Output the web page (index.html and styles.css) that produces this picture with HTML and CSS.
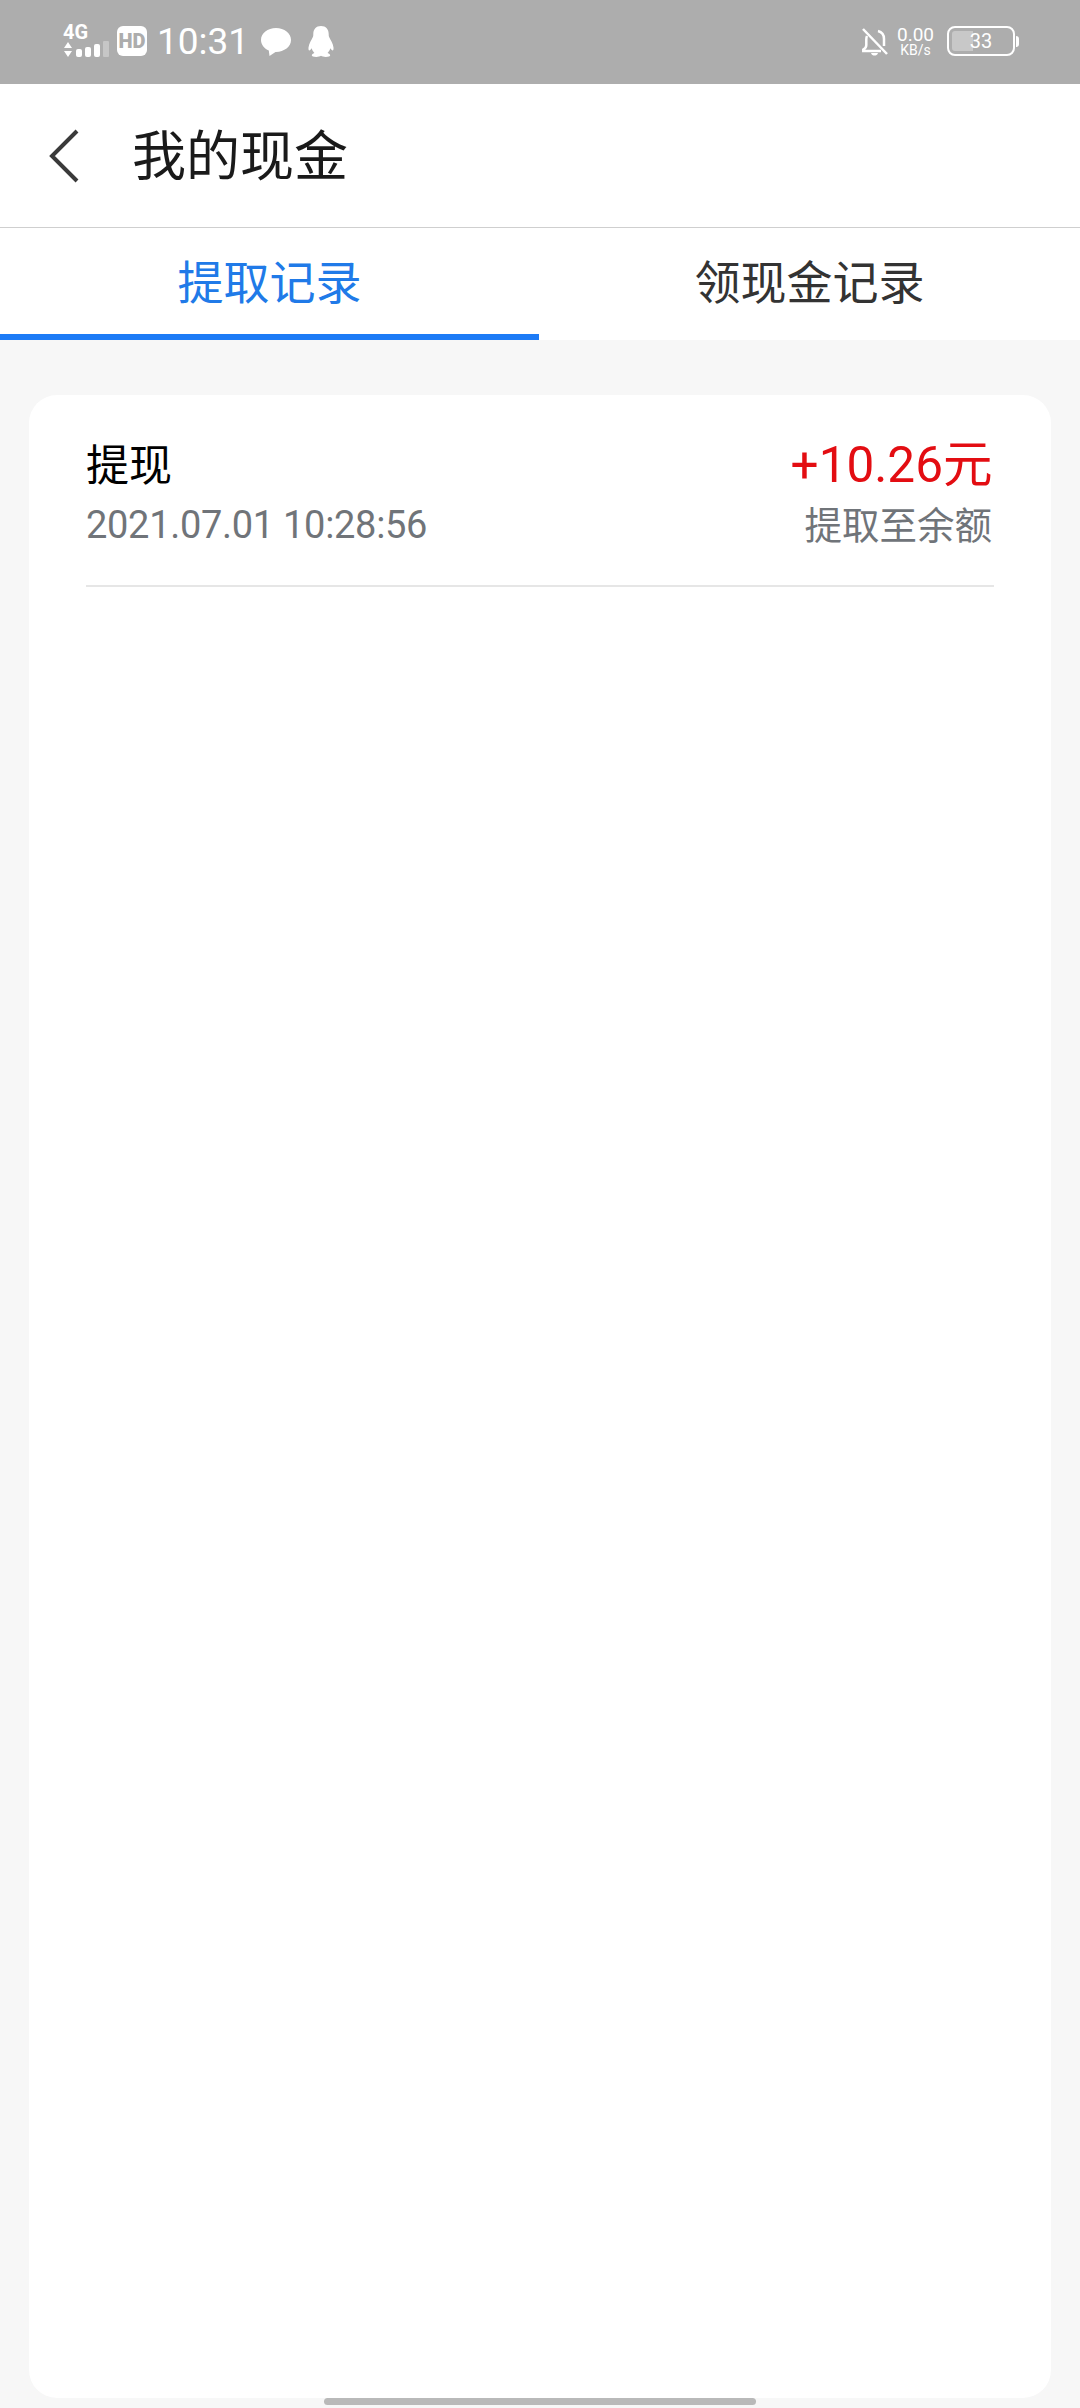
FILE: index.html
```html
<!DOCTYPE html>
<html lang="zh-CN">
<head>
  <meta charset="UTF-8">
  <meta name="viewport" content="width=device-width, initial-scale=1.0">
  <title>我的现金</title>
  <link rel="stylesheet" href="styles.css">
</head>
<body>
  <div class="status-bar">
    <div class="status-left">
      <div class="signal">
        <span class="net-type">4G</span>
        <svg width="48" height="17" viewBox="0 0 48 17">
          <path d="M1 7 5 1l4 6zM1 10h8l-4 6z" fill="#fff"/>
          <rect x="13" y="8" width="6" height="8" rx="2" fill="#fff"/>
          <rect x="22" y="6" width="6" height="10" rx="2" fill="#fff"/>
          <rect x="31" y="3" width="6" height="13" rx="2" fill="#fff"/>
          <rect x="40" y="0" width="6" height="16" rx="1" fill="#c6c6c6"/>
        </svg>
      </div>
      <span class="hd-badge">HD</span>
      <span class="clock">10:31</span>
      <svg class="icon-msg" width="30" height="29" viewBox="0 0 30 29">
        <path d="M15 0C6.700 0 0 5.300 0 12c0 4.600 3.200 8.600 7.800 10.600L8.500 28l6-4.100h.5c8.300 0 15-5.300 15-11.900S23.300 0 15 0z" fill="#fff"/>
      </svg>
      <svg class="icon-qq" width="26" height="31" viewBox="0 0 26 31">
        <path d="M13 0c-5 0-7.700 3.500-7.700 8 0 1.200 0 2-.3 2.800C3.500 14 1 17.500 .5 21.500c-.2 1.700.2 3 .8 3 .7 0 1.700-1 2.400-2.200.4 1.800 1.300 3.300 2.700 4.600-1.500.5-2.600 1.400-2.600 2.400 0 1 1.700 1.700 4.500 1.700 2 0 3.600-.5 4.700-1.200 1.100.7 2.700 1.200 4.700 1.200 2.800 0 4.500-.7 4.500-1.700 0-1-1.100-1.900-2.600-2.400 1.400-1.300 2.300-2.800 2.700-4.600.7 1.200 1.700 2.200 2.400 2.200.6 0 1-1.300.8-3-.5-4-3-7.500-4.500-10.700-.3-.8-.3-1.600-.3-2.800C20.700 3.500 18 0 13 0z" fill="#fff"/>
      </svg>
    </div>
    <div class="status-right">
      <svg width="28" height="30" viewBox="0 0 28 30" fill="none" stroke="#fff" stroke-width="2.500">
        <path d="M2 2 26 27"/>
        <path d="M6 9c-.5 1-.7 2-.7 3.500V18c0 2-1 3.500-3 4.500V24H20M17 4c4 1 6 4 6 8v7"/>
        <path d="M10 26h7c-.5 2-2 2.500-3.500 2.500S10.500 28 10 26z" fill="#fff" stroke="none"/>
      </svg>
      <div class="net-speed">
        <span class="speed-num">0.00</span>
        <span class="speed-unit">KB/s</span>
      </div>
      <div class="battery">
        <div class="battery-body">
          <div class="battery-fill"></div>
          <span class="battery-num">33</span>
        </div>
        <div class="battery-cap"></div>
      </div>
    </div>
  </div>

  <header class="title-bar">
    <svg class="back" width="32" height="54" viewBox="0 0 32 54" fill="none">
      <path d="M29 2 4 27l25 25" stroke="#3a3a3a" stroke-width="4"/>
    </svg>
    <h1>我的现金</h1>
  </header>

  <nav class="tabs">
    <div class="tab tab-active">提取记录</div>
    <div class="tab">领现金记录</div>
  </nav>

  <main class="content">
    <section class="card">
      <div class="record">
        <div class="record-left">
          <div class="record-name">提现</div>
          <div class="record-time">2021.07.01 10:28:56</div>
        </div>
        <div class="record-right">
          <div class="record-amount">+10.26元</div>
          <div class="record-note">提取至余额</div>
        </div>
      </div>
    </section>
    <div class="home-bar"></div>
  </main>
</body>
</html>
```

FILE: styles.css
```css
* {
  box-sizing: border-box;
}

html,
body {
  margin: 0;
  height: 100%;
}

body {
  display: flex;
  flex-direction: column;
  height: 2408px;
  overflow: hidden;
  background-color: #f7f7f7;
  font-family: "Noto Sans CJK SC", "Roboto", sans-serif;
}

.status-bar {
  display: flex;
  justify-content: space-between;
  align-items: center;
  height: 84px;
  padding: 0 61px 2px 63px;
  background-color: #adadad;
  color: #fff;
}

.status-left,
.status-right {
  display: flex;
  align-items: center;
}

.signal {
  display: flex;
  flex-direction: column;
  width: 48px;
}

.net-type {
  font-family: "Roboto", sans-serif;
  font-size: 20px;
  font-weight: 700;
  line-height: 17px;
}

.hd-badge {
  width: 30px;
  height: 30px;
  margin-left: 6px;
  border-radius: 6px;
  background-color: #fff;
  color: #adadad;
  font-family: "Roboto", sans-serif;
  font-size: 20px;
  font-weight: 900;
  line-height: 30px;
  text-align: center;
}

.clock {
  margin: 2px 0 0 10px;
  font-family: "Roboto", sans-serif;
  font-size: 37px;
  font-weight: 400;
  line-height: 40px;
}

.icon-msg {
  margin-left: 12px;
  margin-top: 2px;
}

.icon-qq {
  margin-left: 17px;
}

.status-right svg {
  margin-top: 1px;
}

.net-speed {
  display: flex;
  flex-direction: column;
  align-items: center;
  margin-left: 8px;
  font-family: "Roboto", sans-serif;
}

.speed-num {
  font-size: 19px;
  line-height: 17px;
}

.speed-unit {
  font-size: 14px;
  line-height: 14px;
}

.battery {
  display: flex;
  align-items: center;
  margin-left: 13px;
}

.battery-body {
  position: relative;
  width: 68px;
  height: 30px;
  padding: 3px;
  border: 2px solid #fff;
  border-radius: 8px;
}

.battery-fill {
  width: 21px;
  height: 100%;
  border-radius: 3px 0 0 3px;
  background-color: #c8c8c8;
}

.battery-num {
  position: absolute;
  top: 0;
  left: 0;
  width: 100%;
  font-family: "Roboto", sans-serif;
  font-size: 20px;
  font-weight: 400;
  line-height: 26px;
  text-align: center;
}

.battery-cap {
  width: 3px;
  height: 11px;
  margin-left: 1px;
  border-radius: 0 3px 3px 0;
  background-color: #fff;
}

.title-bar {
  display: flex;
  align-items: center;
  height: 144px;
  padding: 0 0 0 48px;
  background-color: #fff;
  border-bottom: 1px solid #cfcfcf;
}

.title-bar h1 {
  margin: 0 0 6px 52px;
  color: #1a1a1a;
  font-size: 54px;
  font-weight: 400;
  line-height: 60px;
}

.tabs {
  display: flex;
  height: 112px;
  background-color: #fff;
}

.tab {
  width: 541px;
  color: #333;
  font-size: 46px;
  line-height: 102px;
  text-align: center;
}

.tab-active {
  width: 539px;
  border-bottom: 6px solid #1d7bf6;
  color: #207ae8;
}

.content {
  position: relative;
  flex: 1;
  padding: 55px 29px 10px;
}

.card {
  height: 100%;
  padding: 0 57px;
  border-radius: 28px;
  background-color: #fff;
}

.record {
  display: flex;
  justify-content: space-between;
  height: 192px;
  padding-top: 40px;
  border-bottom: 2px solid #e6e6e6;
}

.record-name {
  color: #000;
  font-size: 43px;
  line-height: 54px;
}

.record-time {
  margin-top: 13px;
  color: #707479;
  font-family: "Roboto", sans-serif;
  font-size: 38px;
  letter-spacing: -0.3px;
  line-height: 46px;
}

.record-right {
  padding-right: 2px;
  text-align: right;
}

.record-amount {
  margin-top: 3px;
  color: #e30d12;
  font-family: "Roboto", sans-serif;
  font-size: 49.500px;
  font-weight: 400;
  line-height: 54px;
}

.record-note {
  margin-top: 8px;
  color: #707479;
  font-size: 37.500px;
  line-height: 46px;
}

/* gesture bar sits over the bottom edge of the card */
.home-bar {
  position: absolute;
  left: 324px;
  bottom: 3px;
  width: 432px;
  height: 7px;
  border-radius: 4px;
  background-color: #b9b9b9;
}
```
